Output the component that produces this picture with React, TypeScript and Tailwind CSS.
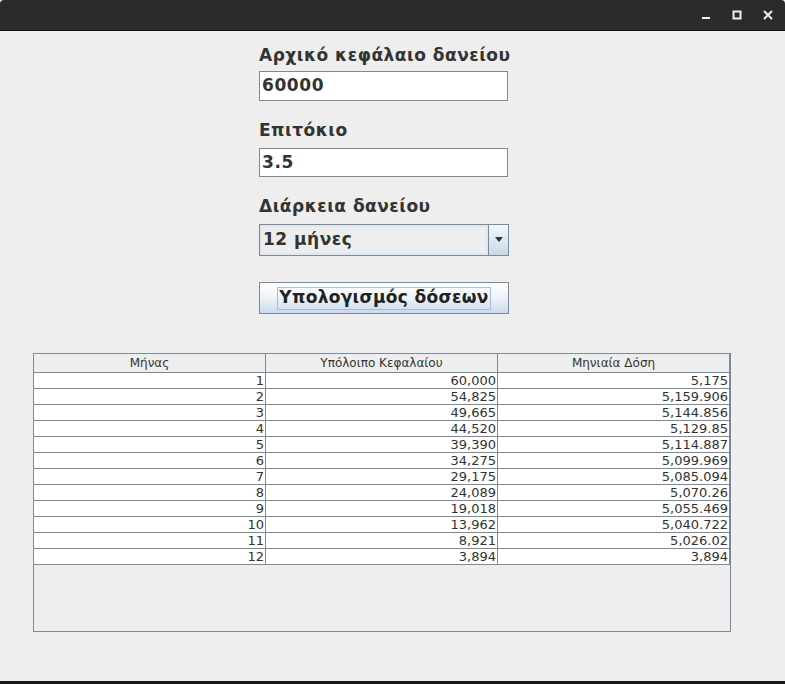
import React from "react";

const rows = [
  ["1", "60,000", "5,175"],
  ["2", "54,825", "5,159.906"],
  ["3", "49,665", "5,144.856"],
  ["4", "44,520", "5,129.85"],
  ["5", "39,390", "5,114.887"],
  ["6", "34,275", "5,099.969"],
  ["7", "29,175", "5,085.094"],
  ["8", "24,089", "5,070.26"],
  ["9", "19,018", "5,055.469"],
  ["10", "13,962", "5,040.722"],
  ["11", "8,921", "5,026.02"],
  ["12", "3,894", "3,894"],
];

const font = { fontFamily: '"DejaVu Sans", sans-serif' };

function TitleBar() {
  return (
    <div className="h-[31px] bg-[#2b2b2b] rounded-t-[4px] flex items-center justify-end pr-[10px] gap-[17px] border-b border-[#111]">
      <svg width="14" height="14" viewBox="0 0 14 14">
        <rect x="3" y="9" width="8" height="2" fill="#f0f0f0" />
      </svg>
      <svg width="14" height="14" viewBox="0 0 14 14">
        <rect x="3.5" y="3.5" width="7" height="7" fill="none" stroke="#f0f0f0" strokeWidth="2" />
      </svg>
      <svg width="14" height="14" viewBox="0 0 14 14">
        <path d="M3 3 L11 11 M11 3 L3 11" stroke="#f0f0f0" strokeWidth="2" />
      </svg>
    </div>
  );
}

function Label({ children, top }: { children: React.ReactNode; top: string }) {
  return <div className={`${top} text-[17px] font-bold text-[#333] leading-[20px] tracking-[0.5px]`}>{children}</div>;
}

export default function App() {
  return (
    <div className="w-[785px] h-[684px] bg-[#eeeeee] flex flex-col" style={font}>
      <TitleBar />
      <div className="flex-1 flex flex-col">
        <div className="pl-[259px] flex flex-col w-[520px]">
          <Label top="mt-[14px]">Αρχικό κεφάλαιο δανείου</Label>
          <div className="mt-[6px] h-[30px] w-[249px] bg-white border border-[#7a8a99] flex items-center pl-[2px] text-[17px] font-bold text-[#333] tracking-[0.6px]">
            60000
          </div>
          <Label top="mt-[19px]">Επιτόκιο</Label>
          <div className="mt-[8px] h-[29px] w-[249px] bg-white border border-[#7a8a99] flex items-center pl-[2px] text-[17px] font-bold text-[#333] tracking-[0.6px]">
            3.5
          </div>
          <Label top="mt-[19px]">Διάρκεια δανείου</Label>
          <div className="mt-[8px] h-[32px] w-[250px] border border-[#7a8a99] flex">
            <div className="flex-1 bg-[#eeeeee] border-2 border-[#dfe8f1] flex items-center pl-[1px] text-[17px] font-bold text-[#333] tracking-[0.5px]">
              12 μήνες
            </div>
            <div className="w-[20px] border-l border-[#7a8a99] bg-gradient-to-b from-[#f4f7fa] to-[#c8d9ea] flex items-center justify-center">
              <svg width="10" height="6" viewBox="0 0 10 6">
                <path d="M1 0 L9 0 L5 5 Z" fill="#333" />
              </svg>
            </div>
          </div>
          <div className="mt-[26px] h-[32px] w-[250px] border border-[#7a8a99] bg-gradient-to-b from-[#ffffff] via-[#eef3f8] to-[#c9daec] flex items-center justify-center">
            <div className="border border-[#a8bdd3] px-[1px] h-[23px] flex items-center text-[17px] font-bold text-[#222] tracking-[0.3px]">
              Υπολογισμός δόσεων
            </div>
          </div>
        </div>

        <div className="ml-[33px] mt-[39px] w-[698px] h-[279px] border border-[#7a8a99] bg-[#eeeeee]">
          <div className="flex h-[19px] bg-[#eeeeee] border-b border-[#7a8a99] text-[12px] text-[#333]">
            <div className="w-[232px] border-r border-[#7a8a99] flex items-center justify-center">Μήνας</div>
            <div className="w-[232px] border-r border-[#7a8a99] flex items-center justify-center">Υπόλοιπο Κεφαλαίου</div>
            <div className="w-[232px] border-r border-[#7a8a99] flex items-center justify-center">Μηνιαία Δόση</div>
          </div>
          {rows.map((r, i) => (
            <div key={i} className="flex h-[16px] bg-white border-b border-[#7a8a99] text-[13px] text-[#333] leading-[15px]">
              {r.map((c, j) => (
                <div key={j} className="w-[232px] border-r border-[#7a8a99] text-right pr-[1px]">
                  {c}
                </div>
              ))}
            </div>
          ))}
        </div>
        <div className="flex-1" />
      </div>
      <div className="h-[3px] bg-[#1a1a1a]" />
    </div>
  );
}
